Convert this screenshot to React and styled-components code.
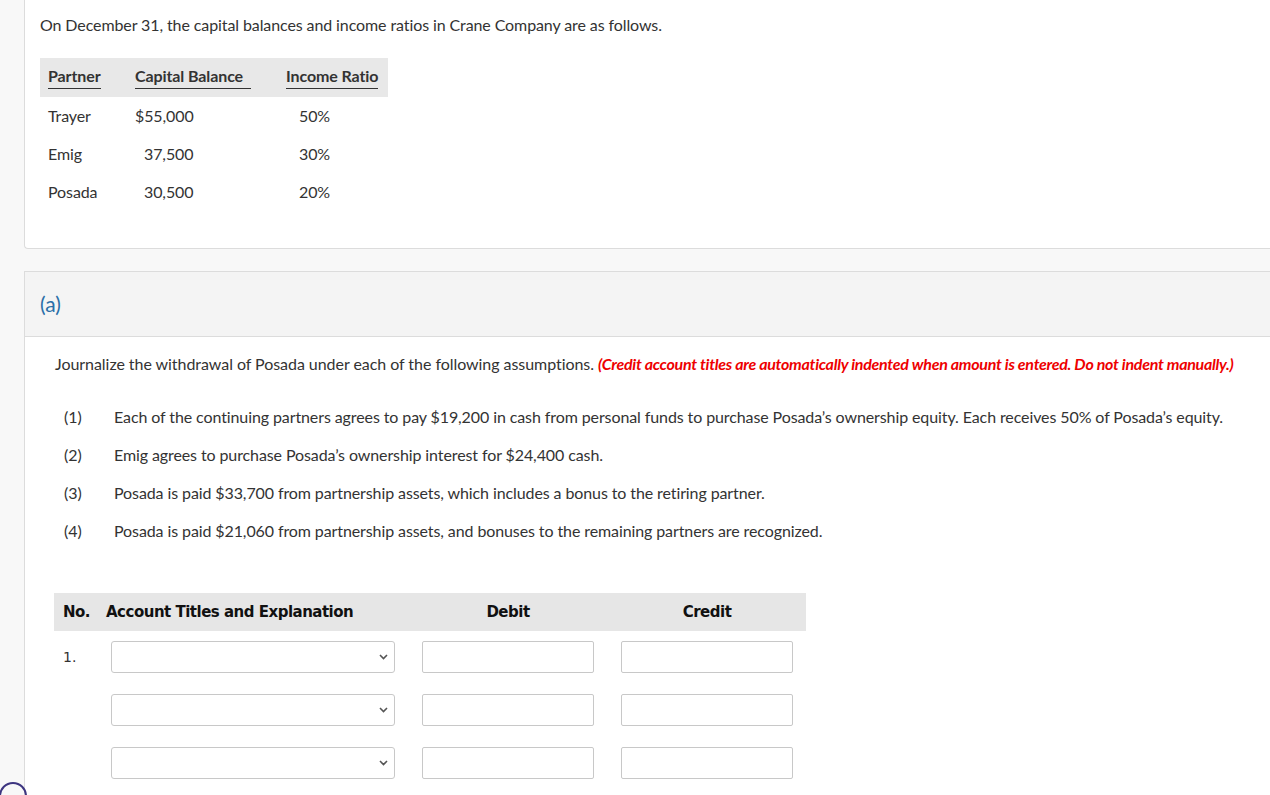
import React from "react";
import styled, { createGlobalStyle } from "styled-components";

const Global = createGlobalStyle`
  html, body { margin: 0; padding: 0; }
  body {
    background: #f8f8f8;
    font-family: Lato, "Open Sans", sans-serif;
    color: #333;
    overflow: hidden;
  }
`;

const Page = styled.div`
  padding-left: 24px;
  width: 1270px;
  height: 795px;
  box-sizing: border-box;
  overflow: hidden;
`;

const Card = styled.section`
  background: #fff;
  border: 1px solid #dcdcdc;
  border-top: none;
  border-right: none;
  border-radius: 0 0 0 4px;
  padding: 15px 0 0 15px;
  height: 249px;
  box-sizing: border-box;
`;

const Intro = styled.p`
  margin: 0;
  font-size: 16px;
  line-height: 20px;
  letter-spacing: -0.1px;
`;

const DataTable = styled.table`
  margin-top: 23px;
  border-collapse: collapse;
  table-layout: fixed;
  width: 348px;
  font-size: 16px;
  letter-spacing: -0.1px;
`;

const Col = styled.col`
  width: ${(p) => p.$w}px;
`;

const Th = styled.th`
  background: #e8e8e8;
  height: 39px;
  padding: 0 0 0 8px;
  font-weight: 700;
  color: #333;
  text-align: left;
  vertical-align: middle;
  white-space: nowrap;
`;

const HeadLabel = styled.span`
  display: inline-block;
  border-bottom: 1px solid #333;
  padding: 0 ${(p) => p.$extra || 0}px 2px 0;
  line-height: 20px;
`;

const Td = styled.td`
  height: 38px;
  padding: 0 0 0 ${(p) => p.$pl || 8}px;
  vertical-align: middle;
  white-space: nowrap;
  line-height: 18px;
`;

const Gap = styled.div`
  height: 22px;
`;

const Panel = styled.section`
  background: #fff;
  border-top: 1px solid #dcdcdc;
  border-left: 1px solid #dcdcdc;
  height: 560px;
`;

const PanelHead = styled.header`
  background: #f4f4f4;
  border-bottom: 1px solid #dcdcdc;
  height: 65px;
  display: flex;
  align-items: center;
  padding-left: 15px;
  box-sizing: border-box;
`;

const PartLabel = styled.h2`
  margin: 0 0 2px 0;
  font-size: 21px;
  font-weight: 400;
  color: #2a6fa8;
`;

const PanelBody = styled.div`
  padding: 17px 0 0 29px;
`;

const Instruction = styled.p`
  margin: 0;
  padding-left: 1px;
  font-size: 16px;
  line-height: 20px;
  letter-spacing: -0.05px;
  white-space: nowrap;
`;

const Warn = styled.strong`
  color: #ee0000;
  font-style: italic;
  font-weight: 700;
  letter-spacing: -0.28px;
`;

const Steps = styled.ol`
  list-style: none;
  margin: 23px 0 0 0;
  padding: 0 0 0 10px;
`;

const Step = styled.li`
  display: flex;
  height: 38px;
  align-items: center;
  font-size: 16px;
  white-space: nowrap;
  letter-spacing: -0.1px;
`;

const StepNo = styled.span`
  width: 50px;
`;

const Journal = styled.div`
  margin-top: 44px;
  width: 752px;
`;

const JHead = styled.div`
  display: grid;
  grid-template-columns: 52px 316px 172px 27px 172px;
  align-items: center;
  height: 38px;
  background: #e6e6e6;
  font-family: "DejaVu Sans", Verdana, sans-serif;
  font-weight: 700;
  font-size: 15px;
  letter-spacing: -0.5px;
  color: #111;
`;

const JCell = styled.div`
  grid-column: ${(p) => p.$col};
  padding-left: ${(p) => p.$pl || 0}px;
  text-align: ${(p) => p.$align || "left"};
`;

const JRow = styled.div`
  display: grid;
  grid-template-columns: 57px 284px 27px 172px 27px 172px;
  align-items: center;
  margin-top: ${(p) => (p.$first ? 10 : 21)}px;
  height: 32px;
`;

const RowNo = styled.span`
  font-family: "DejaVu Sans", Verdana, sans-serif;
  font-size: 14px;
  color: #333;
  padding-left: 9px;
`;

const SelectBox = styled.div`
  grid-column: 2;
  height: 32px;
  border: 1px solid #c8c8c8;
  border-radius: 3px;
  box-sizing: border-box;
  display: flex;
  align-items: center;
  justify-content: flex-end;
  padding-right: 6px;
  background: #fff;
`;

const Amount = styled.div`
  grid-column: ${(p) => p.$col};
  height: 32px;
  border: 1px solid #c8c8c8;
  border-radius: 2px;
  box-sizing: border-box;
  background: #fff;
`;

const Bubble = styled.svg`
  position: fixed;
  left: 0;
  bottom: 0;
`;

const Chevron = () => (
  <svg width="9" height="6" viewBox="0 0 9 6">
    <path d="M1 1 L4.5 4.5 L8 1" fill="none" stroke="#555" strokeWidth="1.6" />
  </svg>
);

const partners = [
  ["Trayer", "$55,000", "50%"],
  ["Emig", "37,500", "30%"],
  ["Posada", "30,500", "20%"],
];

const steps = [
  "Each of the continuing partners agrees to pay $19,200 in cash from personal funds to purchase Posada\u2019s ownership equity. Each receives 50% of Posada\u2019s equity.",
  "Emig agrees to purchase Posada\u2019s ownership interest for $24,400 cash.",
  "Posada is paid $33,700 from partnership assets, which includes a bonus to the retiring partner.",
  "Posada is paid $21,060 from partnership assets, and bonuses to the remaining partners are recognized.",
];

export default function App() {
  return (
    <>
      <Global />
      <Page>
        <Card>
          <Intro>On December 31, the capital balances and income ratios in Crane Company are as follows.</Intro>
          <DataTable>
            <colgroup>
              <Col $w={87} />
              <Col $w={151} />
              <Col $w={110} />
            </colgroup>
            <thead>
              <tr>
                <Th><HeadLabel>Partner</HeadLabel></Th>
                <Th><HeadLabel $extra={8}>Capital Balance</HeadLabel></Th>
                <Th><HeadLabel>Income Ratio</HeadLabel></Th>
              </tr>
            </thead>
            <tbody>
              {partners.map(([n, c, r], i) => (
                <tr key={n}>
                  <Td>{n}</Td>
                  <Td $pl={i === 0 ? 8 : 17}>{c}</Td>
                  <Td $pl={21}>{r}</Td>
                </tr>
              ))}
            </tbody>
          </DataTable>
        </Card>
        <Gap />
        <Panel>
          <PanelHead>
            <PartLabel>(a)</PartLabel>
          </PanelHead>
          <PanelBody>
            <Instruction>
              Journalize the withdrawal of Posada under each of the following assumptions.{" "}
              <Warn>(Credit account titles are automatically indented when amount is entered. Do not indent manually.)</Warn>
            </Instruction>
            <Steps>
              {steps.map((s, i) => (
                <Step key={i}>
                  <StepNo>({i + 1})</StepNo>
                  <span>{s}</span>
                </Step>
              ))}
            </Steps>
            <Journal>
              <JHead>
                <JCell $col={1} $pl={9}>No.</JCell>
                <JCell $col={2}>Account Titles and Explanation</JCell>
                <JCell $col={3} $align="center">Debit</JCell>
                <JCell $col={5} $align="center">Credit</JCell>
              </JHead>
              {[0, 1, 2].map((i) => (
                <JRow key={i} $first={i === 0}>
                  <RowNo>{i === 0 ? "1." : ""}</RowNo>
                  <SelectBox><Chevron /></SelectBox>
                  <Amount $col={4} />
                  <Amount $col={6} />
                </JRow>
              ))}
            </Journal>
          </PanelBody>
        </Panel>
      </Page>
      <Bubble width="30" height="16" viewBox="0 0 30 16">
        <circle cx="13" cy="17" r="13" fill="none" stroke="#3d3580" strokeWidth="2" />
      </Bubble>
    </>
  );
}
